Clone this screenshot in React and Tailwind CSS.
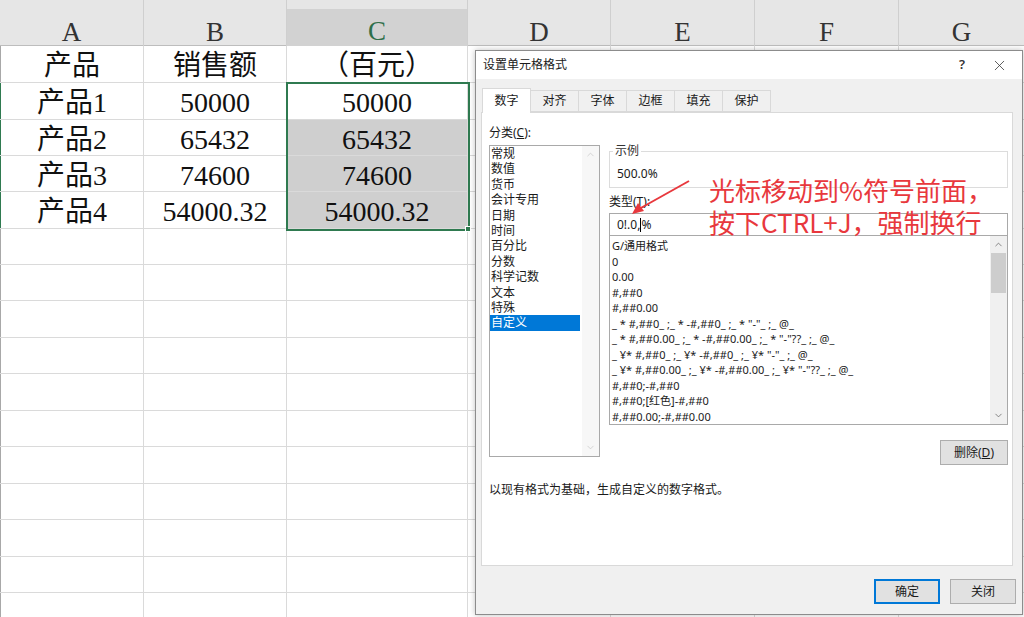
import React from 'react';
import { X, ChevronUp, ChevronDown } from 'lucide-react';

const headers = ['A', 'B', 'C', 'D', 'E', 'F', 'G'];

const data = [
  ['产品', '销售额', '（百元）'],
  ['产品1', '50000', '50000'],
  ['产品2', '65432', '65432'],
  ['产品3', '74600', '74600'],
  ['产品4', '54000.32', '54000.32'],
];

// row heights so the grid lines land where the screenshot has them
const rowHeights = [37, 37, 36, 36, 37, 36, 36, 37, 36, 37, 36, 37, 36, 37, 36, 37];

const categories = ['常规', '数值', '货币', '会计专用', '日期', '时间', '百分比', '分数', '科学记数', '文本', '特殊', '自定义'];

const formats = [
  'G/通用格式',
  '0',
  '0.00',
  '#,##0',
  '#,##0.00',
  '_ * #,##0_ ;_ * -#,##0_ ;_ * "-"_ ;_ @_',
  '_ * #,##0.00_ ;_ * -#,##0.00_ ;_ * "-"??_ ;_ @_',
  '_ ¥* #,##0_ ;_ ¥* -#,##0_ ;_ ¥* "-"_ ;_ @_',
  '_ ¥* #,##0.00_ ;_ ¥* -#,##0.00_ ;_ ¥* "-"??_ ;_ @_',
  '#,##0;-#,##0',
  '#,##0;[红色]-#,##0',
  '#,##0.00;-#,##0.00',
];

const tabs = ['数字', '对齐', '字体', '边框', '填充', '保护'];

const Sheet = () => (
  <div className="relative font-['Liberation_Serif','Noto_Sans_CJK_SC',serif] text-[#111]">
    {/* column headers */}
    <div className="grid grid-cols-[144px_143px_181px_143px_144px_144px_1fr] h-[46px] bg-[#e6e6e6] border-b border-[#bdbdbd]">
      {headers.map((h) => (
        <div key={h} className="pt-[9px] border-r border-[#cfcfcf] last:border-r-0">
          <div
            className={
              h === 'C'
                ? 'h-full flex items-center justify-center pt-[2px] text-[27px] text-[#2f6f4a] bg-[#d2d2d2] border-b-2 border-[#2f7a50]'
                : 'h-full flex items-center justify-center pt-[2px] text-[27px] text-[#333]'
            }
          >
            {h}
          </div>
        </div>
      ))}
    </div>

    {/* body rows */}
    {rowHeights.map((rh, r) => {
      const row = data[r] || [];
      const picked = r >= 1 && r <= 4;
      return (
        <div
          key={r}
          className={
            (rh === 37 ? 'h-[37px] ' : 'h-[36px] ') +
            'grid grid-cols-[144px_143px_181px_143px_144px_144px_1fr] border-b border-[#dadada]'
          }
        >
          {headers.map((h, c) => (
            <div
              key={h}
              className={
                'flex items-center justify-center pt-[4px] text-[28px] leading-none border-r border-[#dadada] last:border-r-0 ' +
                (c === 0 ? (picked ? 'border-l border-l-[#2f7a50] ' : 'border-l border-l-[#a8a8a8] ') : '') +
                (c === 2 && r >= 2 && r <= 4 ? 'bg-[#cfcfcf]' : 'bg-white')
              }
            >
              {row[c] || ''}
            </div>
          ))}
        </div>
      );
    })}

    {/* selection outline C2:C5 */}
    <div className="absolute left-[286px] top-[82px] w-[184px] h-[149px] border-2 border-[#2f7a50] pointer-events-none" />
    <div className="absolute left-[465px] top-[226px] w-[6px] h-[6px] bg-[#2f7a50] border border-white" />
  </div>
);

const U = ({ children }) => <span className="underline">{children}</span>;

const FormatDialog = () => (
  <div className="absolute left-[475px] top-[50px] w-[548px] h-[565px] border border-[#8c8c8c] bg-[#f0f0f0] shadow-[0_0_6px_rgba(0,0,0,0.25)] flex flex-col font-['Noto_Sans','Noto_Sans_CJK_SC',sans-serif] text-[12px] text-[#1a1a1a]">
    {/* title bar */}
    <div className="h-[28px] bg-white flex items-center justify-between pl-[7px] pr-[14px]">
      <span>设置单元格格式</span>
      <div className="flex items-center gap-[26px]">
        <span className="text-[13px] font-semibold text-[#333]">?</span>
        <X size={17} strokeWidth={1.1} className="text-[#333]" />
      </div>
    </div>

    <div className="pl-[5px] pt-[9px]">
      {/* tabs */}
      <div className="flex items-end h-[24px] pl-px">
        {tabs.map((t, i) => (
          <div
            key={t}
            className={
              i === 0
                ? 'relative z-10 -mb-px w-[49px] h-[25px] bg-white border border-b-0 border-[#d9d9d9] flex items-center justify-center'
                : 'w-[48px] h-[22px] bg-[#f0f0f0] border border-l-0 border-[#d9d9d9] flex items-center justify-center'
            }
          >
            {t}
          </div>
        ))}
      </div>

      {/* panel */}
      <div className="w-[532px] h-[454px] bg-white border border-[#d9d9d9] pl-[7px] pr-[4px] pt-[10px] flex flex-col">
        <div className="flex gap-[9px]">
          {/* category list */}
          <div className="w-[111px] flex flex-col">
            <div className="h-[20px] leading-[20px]">
              分类(<U>C</U>):
            </div>
            <div className="mt-[2px] h-[312px] border border-[#a9a9a9] flex">
              <div className="flex-1 pr-[2px]">
                {categories.map((c) => (
                  <div
                    key={c}
                    className={
                      c === '自定义'
                        ? 'leading-[15.4px] pl-[1px] bg-[#0078d7] text-white'
                        : 'leading-[15.4px] pl-[1px]'
                    }
                  >
                    {c}
                  </div>
                ))}
              </div>
              <div className="w-[17px] bg-[#f7f7f7] flex flex-col justify-between items-center py-[3px] text-[#c4c4c4]">
                <ChevronUp size={11} strokeWidth={1.5} />
                <ChevronDown size={11} strokeWidth={1.5} />
              </div>
            </div>
          </div>

          {/* format side */}
          <div className="flex-1 flex flex-col">
            <div className="relative mt-[28px] h-[37px] border border-[#dcdcdc] pl-[7px] flex items-center pt-[8px]">
              <span className="absolute -top-[9px] left-[3px] bg-white px-[2px] leading-[16px] text-[#333]">示例</span>
              500.0%
            </div>
            <div className="mt-[6px] h-[16px] leading-[16px]">
              类型(<U>T</U>):
            </div>
            <div className="mt-[3px] h-[23px] border border-[#a9a9a9] flex items-center pl-[7px]">
              <span>0!.0,</span>
              <span className="w-px h-[14px] bg-black" />
              <span>%</span>
            </div>
            <div className="h-[189px] border border-t-0 border-[#a9a9a9] flex overflow-hidden">
              <div className="flex-1 pt-[2px] pl-[2px] text-[11px] whitespace-pre overflow-hidden">
                {formats.map((f, i) => (
                  <div key={i} className="leading-[15.5px]">
                    {f}
                  </div>
                ))}
              </div>
              <div className="w-[17px] bg-[#f0f0f0] flex flex-col items-center">
                <div className="h-[17px] flex items-center justify-center text-[#606060]">
                  <ChevronUp size={11} strokeWidth={1.6} />
                </div>
                <div className="w-[15px] h-[40px] bg-[#cdcdcd]" />
                <div className="flex-1" />
                <div className="h-[17px] flex items-center justify-center text-[#606060]">
                  <ChevronDown size={11} strokeWidth={1.6} />
                </div>
              </div>
            </div>
            <div className="self-end mt-[15px] w-[68px] h-[25px] bg-[#e1e1e1] border border-[#adadad] flex items-center justify-center">
              删除(<U>D</U>)
            </div>
          </div>
        </div>
        <div className="mt-[17px] leading-[16px]">以现有格式为基础，生成自定义的数字格式。</div>
      </div>
    </div>

    {/* footer buttons */}
    <div className="mt-[13px] flex justify-end gap-[10px] pr-[6px]">
      <div className="w-[66px] h-[25px] bg-[#e1e1e1] border-2 border-[#0078d7] flex items-center justify-center">确定</div>
      <div className="w-[66px] h-[25px] bg-[#e1e1e1] border border-[#adadad] flex items-center justify-center">关闭</div>
    </div>
  </div>
);

const Annotation = () => (
  <>
    <svg className="absolute left-[625px] top-[176px]" width="70" height="44" viewBox="0 0 70 44">
      <line x1="64" y1="5" x2="14" y2="33" stroke="#e8383d" strokeWidth="2" />
      <polygon points="7,38 13,27 19,35" fill="#e8383d" />
    </svg>
    <div className="absolute left-[709px] top-[174px] font-['Noto_Sans_CJK_SC',sans-serif] text-[26px] text-[#e8383d] flex flex-col">
      <div className="h-[32px] leading-[32px]">光标移动到%符号前面，</div>
      <div className="h-[32px] leading-[32px]">按下CTRL+J，强制换行</div>
    </div>
  </>
);

export default function App() {
  return (
    <div className="relative w-[1024px] h-[617px] overflow-hidden bg-white">
      <Sheet />
      <FormatDialog />
      <Annotation />
    </div>
  );
}
